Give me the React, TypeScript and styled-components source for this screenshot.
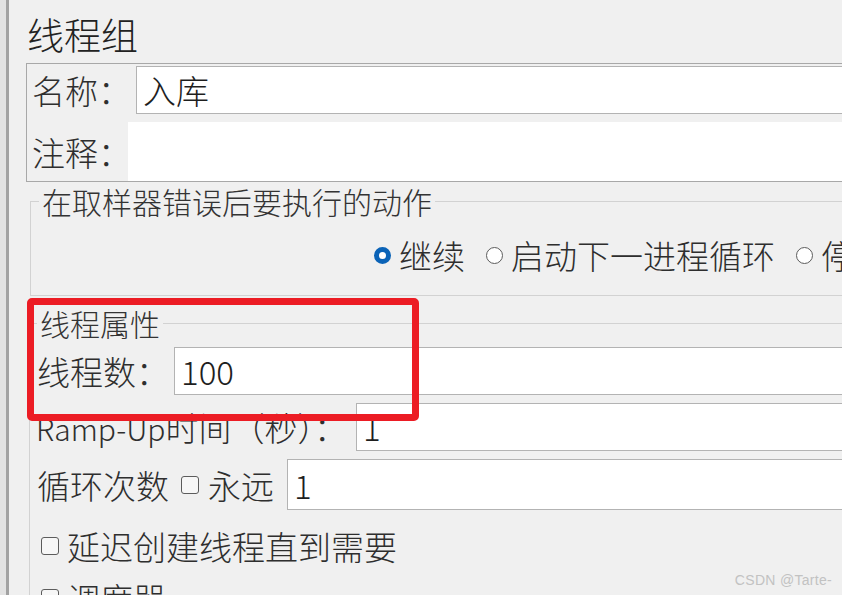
import React from "react";
import styled, { createGlobalStyle } from "styled-components";

const GlobalStyle = createGlobalStyle`
  html, body { margin: 0; padding: 0; background: #f0f0f0; }
  body { font-family: "Noto Sans CJK SC", sans-serif; color: #2e2e2e; font-weight: 300; }
`;

const Frame = styled.div`
  position: relative;
  width: 842px;
  height: 595px;
  overflow: hidden;
  display: flex;
  background: #f0f0f0;
`;

const EdgeBar = styled.div`
  flex: none;
  width: 6px;
  background: #e2e2e2;
  border-right: 3px solid #a2a2a2;
`;

const Main = styled.div`
  flex: none;
  width: 1000px;
  padding: 12px 0 0 17px;
  display: flex;
  flex-direction: column;
`;

const Title = styled.div`
  font-size: 37px;
  line-height: 44px;
  margin-left: 1px;
  color: #222;
`;

const Panel = styled.div`
  margin-top: 7px;
  border: 1px solid #a8a8a8;
  border-right: none;
  padding: 2px 0 0 5px;
  display: flex;
  flex-direction: column;
  gap: 8px;
`;

const FieldRow = styled.div<{ $indent?: number }>`
  display: flex;
  align-items: center;
  padding-left: ${(p) => p.$indent ?? 0}px;
`;

const Label = styled.div<{ $width: number }>`
  flex: none;
  width: ${(p) => p.$width}px;
  font-size: 33px;
  line-height: 40px;
  white-space: nowrap;
`;

const Latin = styled.span`
  font-size: 30px;
`;

const TextInput = styled.div<{ $height?: number }>`
  flex: 1;
  box-sizing: border-box;
  height: ${(p) => p.$height ?? 48}px;
  background: #fff;
  border: 1px solid #b3b3b3;
  border-right: none;
  padding-left: 6px;
  display: flex;
  align-items: center;
  font-size: 33px;
  line-height: 40px;
  color: #1e1e1e;
`;

const TextArea = styled.div`
  flex: 1;
  height: 59px;
  background: #fff;
`;

const Group = styled.fieldset<{ $top: number; $left: number; $pad: number }>`
  margin: ${(p) => p.$top}px 0 0 ${(p) => p.$left}px;
  border: 1px solid #d2d2d2;
  border-right: none;
  padding: 0 0 0 ${(p) => p.$pad}px;
  min-width: 0;
`;

const Legend = styled.legend<{ $shift?: number }>`
  font-size: 30px;
  line-height: 32px;
  padding: 0 3px;
  margin-left: ${(p) => p.$shift ?? 0}px;
  color: #333;
`;

const RadioRow = styled.div`
  display: flex;
  align-items: center;
  gap: 21px;
  padding: 18px 0 20px 335px;
`;

const Choice = styled.div`
  display: flex;
  align-items: center;
  gap: 8px;
  font-size: 33px;
  line-height: 40px;
  white-space: nowrap;
`;

const RadioDot = styled.span<{ $checked?: boolean }>`
  flex: none;
  box-sizing: border-box;
  width: 17px;
  height: 17px;
  border-radius: 50%;
  background: #fff;
  border: ${(p) => (p.$checked ? "5px solid #0b63b7" : "1.5px solid #5c5c5c")};
`;

const CheckBox = styled.span`
  flex: none;
  box-sizing: border-box;
  width: 18px;
  height: 18px;
  border-radius: 3px;
  border: 1.5px solid #5c5c5c;
  background: #f7f7f7;
`;

const Rows = styled.div`
  display: flex;
  flex-direction: column;
  gap: 8px;
  padding-top: 8px;
`;

const LoopChoice = styled(Choice)`
  margin-right: 13px;
  gap: 9px;
`;

const CheckRow = styled(Choice)<{ $top: number }>`
  margin-top: ${(p) => p.$top}px;
  padding-left: 5px;
  height: 44px;
  gap: 8px;
`;

const Annotation = styled.div`
  position: absolute;
  left: 27px;
  top: 298px;
  width: 392px;
  height: 123px;
  box-sizing: border-box;
  border: 7px solid #ec1c24;
  border-radius: 5px;
`;

const Watermark = styled.div`
  position: absolute;
  right: 10px;
  bottom: 7px;
  font-family: "Liberation Sans", sans-serif;
  font-weight: 400;
  font-size: 14px;
  line-height: 16px;
  color: #c2c2c2;
  letter-spacing: 0.3px;
`;

export default function App() {
  return (
    <>
      <GlobalStyle />
      <Frame>
        <EdgeBar />
        <Main>
          <Title>线程组</Title>
          <Panel>
            <FieldRow>
              <Label $width={104}>名称：</Label>
              <TextInput>入库</TextInput>
            </FieldRow>
            <FieldRow>
              <Label $width={96}>注释：</Label>
              <TextArea />
            </FieldRow>
          </Panel>

          <Group $top={3} $left={4} $pad={8}>
            <Legend>在取样器错误后要执行的动作</Legend>
            <RadioRow>
              <Choice>
                <RadioDot $checked />
                继续
              </Choice>
              <Choice>
                <RadioDot />
                启动下一进程循环
              </Choice>
              <Choice>
                <RadioDot />
                停止线程
              </Choice>
            </RadioRow>
          </Group>

          <Group $top={11} $left={3} $pad={6}>
            <Legend $shift={1}>线程属性</Legend>
            <Rows>
              <FieldRow $indent={1}>
                <Label $width={137}>线程数：</Label>
                <TextInput>100</TextInput>
              </FieldRow>
              <FieldRow>
                <Label $width={320}>
                  <Latin>Ramp-Up</Latin>时间（秒）：
                </Label>
                <TextInput>1</TextInput>
              </FieldRow>
              <FieldRow $indent={1}>
                <Label $width={144}>循环次数</Label>
                <LoopChoice>
                  <CheckBox />
                  永远
                </LoopChoice>
                <TextInput $height={51}>1</TextInput>
              </FieldRow>
            </Rows>
            <CheckRow $top={14}>
              <CheckBox />
              延迟创建线程直到需要
            </CheckRow>
            <CheckRow $top={8}>
              <CheckBox />
              调度器
            </CheckRow>
          </Group>
        </Main>
        <Annotation />
        <Watermark>CSDN @Tarte-</Watermark>
      </Frame>
    </>
  );
}
